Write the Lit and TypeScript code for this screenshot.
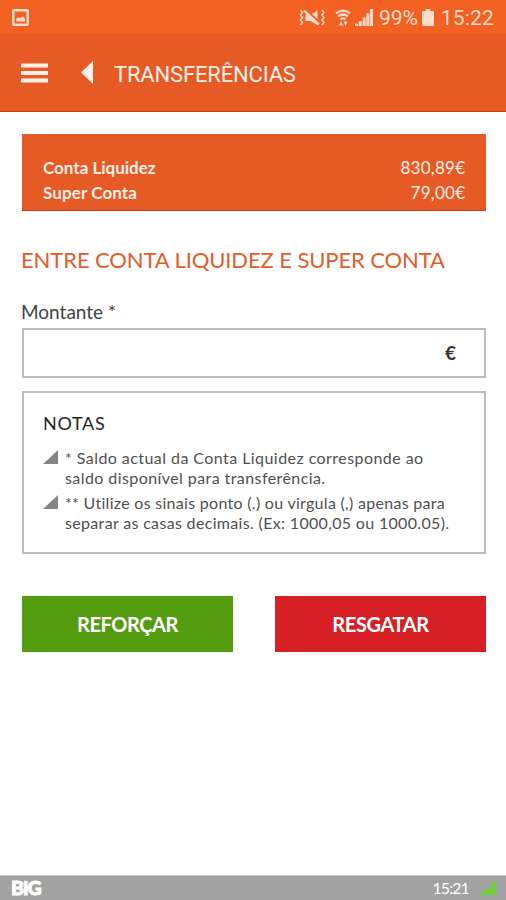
import { LitElement, html, css } from "lit";
import { customElement } from "lit/decorators.js";

@customElement("status-bar")
class StatusBar extends LitElement {
  static styles = css`
    :host { display: flex; align-items: center; height: 34px; box-sizing: border-box; padding: 0 12px; background: #f26022; color: #ffdccb; fill: #ffdccb; font: 21px/34px Roboto, sans-serif; }
    svg { display: block; flex: none; }
    .spacer { flex: 1; }
    .mute { margin-right: 10px; }
    .wifi { margin-right: 4px; }
    .signal { margin-right: 6px; }
    .percent { letter-spacing: -.1px; }
    .battery { margin: 0 7px 0 4px; }
    .percent, .time { padding-top: 2px; }
    .time { letter-spacing: .2px; }
  `;
  render() {
    return html`
      <svg width="17" height="17" viewBox="0 0 17 17"><path fill-rule="evenodd" d="M2 0h13a2 2 0 0 1 2 2v13a2 2 0 0 1-2 2H2a2 2 0 0 1-2-2V2a2 2 0 0 1 2-2zM2.500 2.500v12h12v-12z"/><path d="M4.200 12.500V9.500l2.500-1 1.800.5 2.200-1.500 2.300 2v3z"/></svg>
      <div class="spacer"></div>
      <svg class="mute" width="26" height="17" viewBox="0 0 26 17"><path d="M6.500 5.500h4L20 14.500V16h-2l-6.500-4h-5zM13 5l5.500-3.500V10z"/><path fill="none" stroke="#ffdccb" stroke-width="2.200" d="M5 1.500 20 15.500"/><path fill="none" stroke="#ffdccb" stroke-width="1.500" d="M1.500 1l2 2.500-2 2.500 2 2.500-2 2.500 2 2.500-2 2.500M23 1l2 2.500-2 2.500 2 2.500-2 2.500 2 2.500-2 2.500"/></svg>
      <svg class="wifi" width="16" height="17" viewBox="0 0 16 17"><g fill="none" stroke="#ffdccb" stroke-width="2.200"><path d="M1 4.300q7-5.500 14 0M3 7.500q5-4 10 0M5.500 10.300q2.500-2 5 0"/></g><path d="M3.500 16.500 6 12.500l2.500 4zM8.500 12.500h4L10.500 17z"/></svg>
      <svg class="signal" width="18" height="17" viewBox="0 0 17 16"><path d="M0 16v-2h2.900v2zM3.600 16v-4.500h2.900V16zM7.200 16V8h2.900v8zM10.700 16V4h2.900v12zM14.200 16V0H17v16z"/></svg>
      <span class="percent">99%</span>
      <svg class="battery" width="12" height="17" viewBox="0 0 13 17" preserveAspectRatio="none"><path d="M4 0h5v2h3q1 0 1 1v13q0 1-1 1H1q-1 0-1-1V3q0-1 1-1h3z"/></svg>
      <span class="time">15:22</span>`;
  }
}

@customElement("title-bar")
class TitleBar extends LitElement {
  static styles = css`
    :host { display: flex; align-items: center; height: 78px; box-sizing: border-box; padding: 0 21px; background: #e65a25; border-bottom: 1px solid #d23c10; fill: #fff2ec; }
    svg { display: block; }
    .back { margin: 0 21px 0 33px; }
    h1 { margin: 0; padding-top: 4px; font: 400 22px/30px Roboto, sans-serif; color: #fff0e8; letter-spacing: -.17px; white-space: nowrap; }
  `;
  render() {
    return html`
      <svg width="27" height="20" viewBox="0 0 27 20"><path d="M0 .5h27v4H0zM0 8h27v4H0zM0 15.500h27v4H0z"/></svg>
      <svg class="back" width="12" height="23" viewBox="0 0 12 23"><path d="M12 0v23L0 11.500z"/></svg>
      <h1>TRANSFERÊNCIAS</h1>`;
  }
}

@customElement("balance-card")
class BalanceCard extends LitElement {
  static styles = css`
    :host { display: block; height: 77px; box-sizing: border-box; padding: 21px 21px 0; background: #e65a25; border-bottom: 1px solid #d23c10; color: #fff0e8; font: 17px/25px Lato, sans-serif; }
    .row { display: flex; justify-content: space-between; }
    .name { font-weight: 700; }
    .super { letter-spacing: .1px; }
    .value { letter-spacing: .25px; margin-right: -.25px; }
  `;
  render() {
    return html`
      <div class="row"><span class="name">Conta Liquidez</span><span class="value">830,89€</span></div>
      <div class="row"><span class="name super">Super Conta</span><span class="value">79,00€</span></div>`;
  }
}

@customElement("notes-box")
class NotesBox extends LitElement {
  static styles = css`
    :host { display: block; height: 163px; box-sizing: border-box; border: 2px solid #bdbdbd; padding: 18px 19px 0; color: #505050; }
    h3 { margin: 0 0 13px; font: 400 18px/24px Lato, sans-serif; color: #252525; letter-spacing: .7px; }
    .note { display: flex; gap: 7px; margin-bottom: 5px; font: 16px/20px Lato, sans-serif; white-space: nowrap; }
    svg { display: block; flex: none; margin-top: 2px; }
    .line { display: block; }
    .l1 { letter-spacing: .44px; }
    .l2 { letter-spacing: .42px; }
    .l3 { letter-spacing: .29px; }
    .l4 { letter-spacing: .33px; }
  `;
  render() {
    const mark = html`<svg width="15" height="14" viewBox="0 0 15 14"><path fill="#858585" d="M15 0v14H0z"/></svg>`;
    return html`
      <h3>NOTAS</h3>
      <div class="note">${mark}<div><span class="line l1">* Saldo actual da Conta Liquidez corresponde ao</span><span class="line l2">saldo disponível para transferência.</span></div></div>
      <div class="note">${mark}<div><span class="line l3">** Utilize os sinais ponto (.) ou virgula (,) apenas para</span><span class="line l4">separar as casas decimais. (Ex: 1000,05 ou 1000.05).</span></div></div>`;
  }
}

@customElement("bottom-bar")
class BottomBar extends LitElement {
  static styles = css`
    :host { display: flex; align-items: center; height: 25px; box-sizing: border-box; padding: 0 10px 0 11px; background: #a2a2a2; border-top: 1px solid #c8c8c8; color: #fff; }
    .logo { font: 900 19.500px/24px Lato, sans-serif; letter-spacing: -.6px; -webkit-text-stroke: 1px #fff; }
    .time { margin-left: auto; margin-right: 11px; font: 16px/24px Lato, sans-serif; letter-spacing: -.9px; }
    svg { display: block; }
  `;
  render() {
    return html`<span class="logo">BiG</span><span class="time">15:21</span>
      <svg width="16" height="13" viewBox="0 0 17 16" preserveAspectRatio="none" fill="#70cc3c"><path d="M0 16v-3h3.500v-3H7V8h3.300V4h3.200V0H17v16z"/></svg>`;
  }
}

@customElement("app-root")
class AppRoot extends LitElement {
  static styles = css`
    :host { display: flex; flex-direction: column; height: 900px; background: #fff; font-family: Lato, sans-serif; }
    main { flex: 1; padding: 22px 20px 0 22px; }
    h2 { margin: 34px 0 0 -1px; font: 400 22px/30px Lato, sans-serif; color: #e45b2c; white-space: nowrap; letter-spacing: -.1px; }
    label { display: block; margin: 24px 0 0 -1px; font: 19px/26px Lato, sans-serif; color: #444; }
    .field { display: flex; align-items: center; justify-content: flex-end; height: 50px; box-sizing: border-box; margin: 3px 0 13px; padding-right: 28px; border: 2px solid #bdbdbd; font: 700 19px/24px Lato, sans-serif; color: #333; }
    .actions { display: grid; grid-template-columns: 1fr 1fr; gap: 42px; margin-top: 42px; }
    button { height: 56px; border: 0; padding: 0; color: #fff; font: 700 20px/56px Lato, sans-serif; letter-spacing: -.4px; }
    .add { background: #549c10; }
    .redeem { background: #d71f26; }
  `;
  render() {
    return html`
      <status-bar></status-bar>
      <title-bar></title-bar>
      <main>
        <balance-card></balance-card>
        <h2>ENTRE CONTA LIQUIDEZ E SUPER CONTA</h2>
        <label>Montante *</label>
        <div class="field">€</div>
        <notes-box></notes-box>
        <div class="actions"><button class="add">REFORÇAR</button><button class="redeem">RESGATAR</button></div>
      </main>
      <bottom-bar></bottom-bar>`;
  }
}
